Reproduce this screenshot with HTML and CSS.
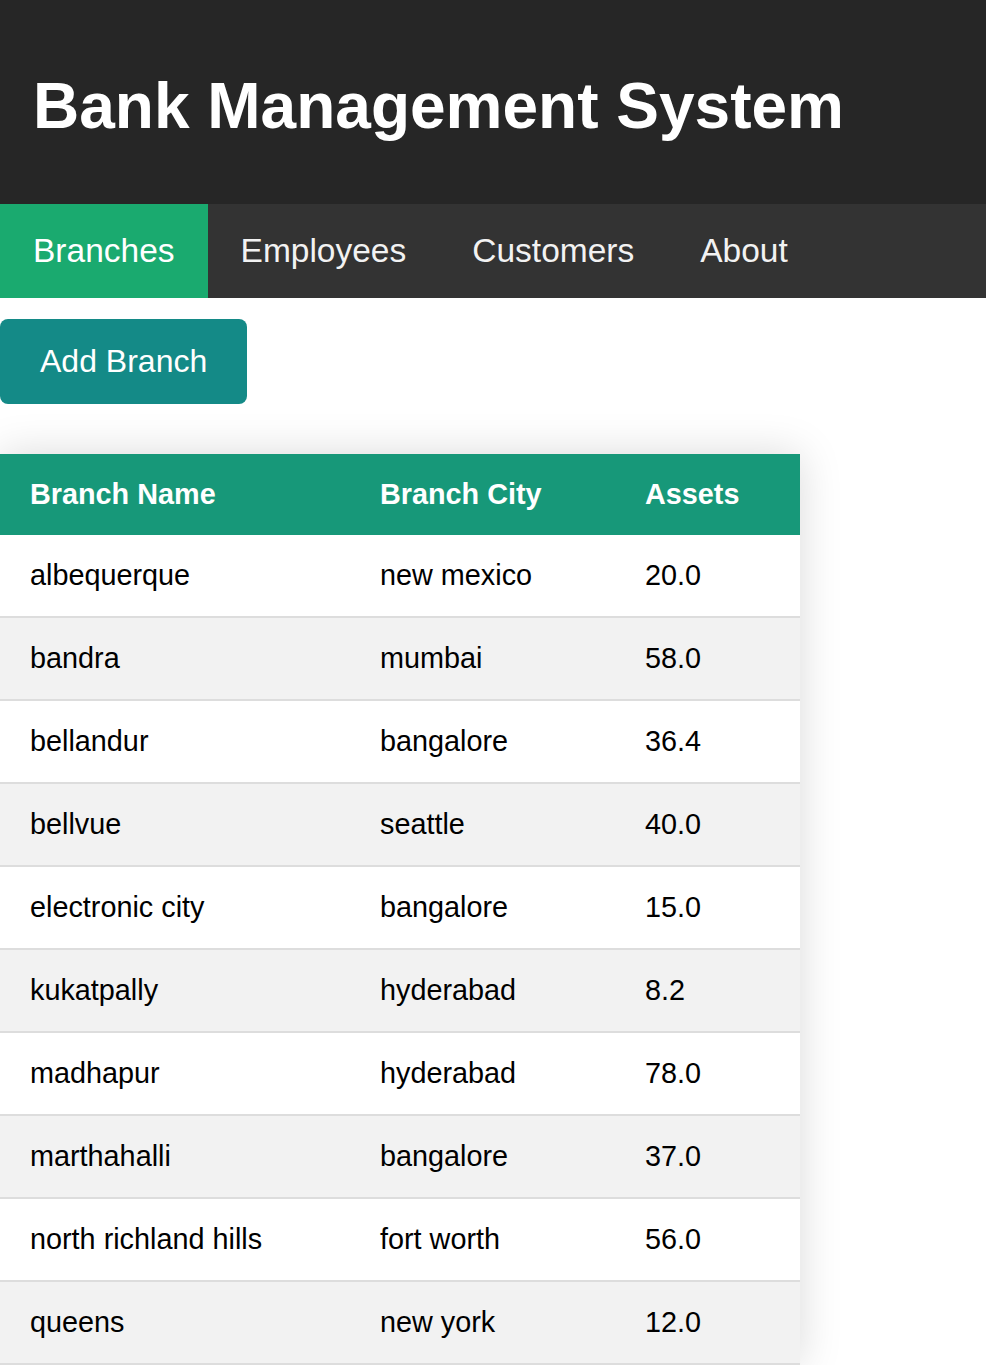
FILE: index.html
```html
<!DOCTYPE html>
<html lang="en">
<head>
<meta charset="utf-8">
<title>Bank Management System</title>
<link rel="stylesheet" href="styles.css">
</head>
<body>
<header class="site-header">
  <h1 class="site-title">Bank Management System</h1>
</header>
<nav class="topnav">
  <a class="nav-link active" href="#">Branches</a>
  <a class="nav-link" href="#">Employees</a>
  <a class="nav-link" href="#">Customers</a>
  <a class="nav-link" href="#">About</a>
</nav>
<main class="content">
  <button class="add-btn" type="button">Add Branch</button>
  <table class="styled-table">
    <thead>
      <tr>
        <th class="col-name">Branch Name</th>
        <th class="col-city">Branch City</th>
        <th class="col-assets">Assets</th>
      </tr>
    </thead>
    <tbody>
      <tr><td>albequerque</td><td>new mexico</td><td>20.0</td></tr>
      <tr><td>bandra</td><td>mumbai</td><td>58.0</td></tr>
      <tr><td>bellandur</td><td>bangalore</td><td>36.4</td></tr>
      <tr><td>bellvue</td><td>seattle</td><td>40.0</td></tr>
      <tr><td>electronic city</td><td>bangalore</td><td>15.0</td></tr>
      <tr><td>kukatpally</td><td>hyderabad</td><td>8.2</td></tr>
      <tr><td>madhapur</td><td>hyderabad</td><td>78.0</td></tr>
      <tr><td>marthahalli</td><td>bangalore</td><td>37.0</td></tr>
      <tr><td>north richland hills</td><td>fort worth</td><td>56.0</td></tr>
      <tr><td>queens</td><td>new york</td><td>12.0</td></tr>
    </tbody>
  </table>
</main>
</body>
</html>
```

FILE: styles.css
```css
html, body {
  margin: 0;
  padding: 0;
  background: #ffffff;
  font-family: "Liberation Sans", Arial, Helvetica, sans-serif;
}

.site-header {
  background: #262626;
  padding: 69px 33px 61px;
}

.site-title {
  margin: 0;
  color: #ffffff;
  font-size: 64px;
  font-weight: bold;
  line-height: normal;
}

.topnav {
  display: flex;
  background: #333333;
}

.nav-link {
  color: #f2f2f2;
  text-decoration: none;
  font-size: 33.5px;
  padding: 27.75px 33px;
  line-height: normal;
}

.nav-link.active {
  background: #1aaa6f;
  color: #ffffff;
}

.content {
  display: flex;
  flex-direction: column;
  align-items: flex-start;
}

.add-btn {
  margin-top: 21px;
  background: #148a87;
  color: #ffffff;
  border: none;
  border-radius: 8px;
  font-family: inherit;
  font-size: 32px;
  padding: 24px 40px;
  line-height: normal;
}

.styled-table {
  margin-top: 50px;
  width: 800px;
  border-collapse: collapse;
  font-size: 28.8px;
  box-shadow: 0 0 40px rgba(0, 0, 0, 0.15);
  color: #000000;
}

.styled-table thead tr {
  background: #179879;
  color: #ffffff;
  text-align: left;
}

.styled-table th {
  font-weight: bold;
}

.styled-table th,
.styled-table td {
  padding: 24px 30px;
  line-height: normal;
}

.col-name { width: 290px; }
.col-city { width: 205px; }
.col-assets { width: 125px; }

.styled-table tbody tr {
  border-bottom: 2px solid #dddddd;
}

.styled-table tbody tr:nth-of-type(even) {
  background: #f2f2f2;
}
```
